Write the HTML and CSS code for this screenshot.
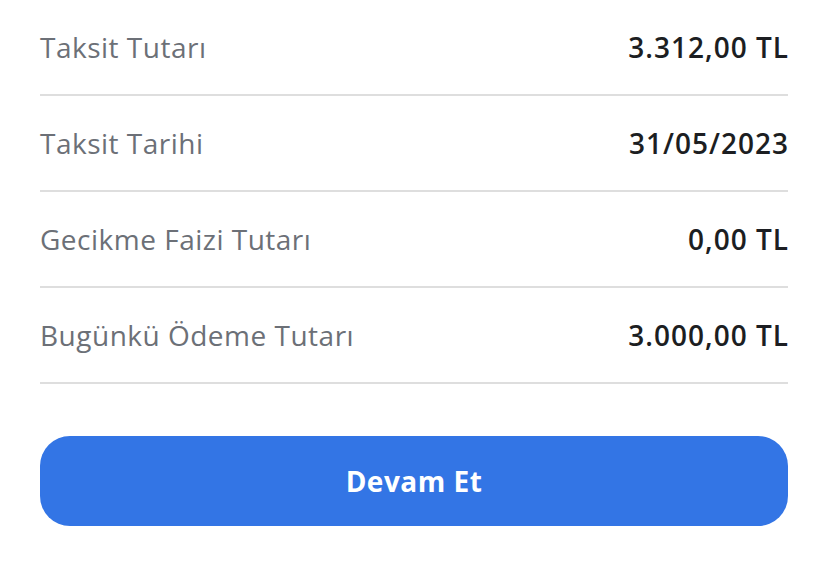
FILE: index.html
```html
<!DOCTYPE html>
<html lang="tr">
<head>
<meta charset="utf-8">
<link rel="stylesheet" href="styles.css">
</head>
<body>
<div class="page">
  <div class="list">
    <div class="row"><span class="label">Taksit Tutarı</span><span class="value">3.312,00 TL</span></div>
    <div class="row"><span class="label">Taksit Tarihi</span><span class="value">31/05/2023</span></div>
    <div class="row"><span class="label">Gecikme Faizi Tutarı</span><span class="value">0,00 TL</span></div>
    <div class="row"><span class="label">Bugünkü Ödeme Tutarı</span><span class="value">3.000,00 TL</span></div>
  </div>
  <button class="btn">Devam Et</button>
</div>
</body>
</html>
```
FILE: styles.css
```css
html, body { margin: 0; padding: 0; background: #ffffff; }
body { font-family: "Open Sans", "Noto Sans", sans-serif; }
.page { padding: 0 40px; display: flex; flex-direction: column; }
.list { display: flex; flex-direction: column; }
.row {
  height: 94px;
  border-bottom: 2px solid #dedede;
  display: flex;
  align-items: center;
  justify-content: space-between;
}
.label { font-size: 28px; letter-spacing: 0.5px; color: #6c7077; }
.value { font-size: 28px; letter-spacing: 1px; font-weight: 600; color: #1c1e22; margin-right: -1px; }
.btn {
  margin-top: 52px;
  height: 90px;
  border: none;
  border-radius: 30px;
  background: #3375e5;
  color: #ffffff;
  font-family: inherit;
  font-size: 28px;
  letter-spacing: 0.5px;
  font-weight: 700;
  width: 100%;
}
```
